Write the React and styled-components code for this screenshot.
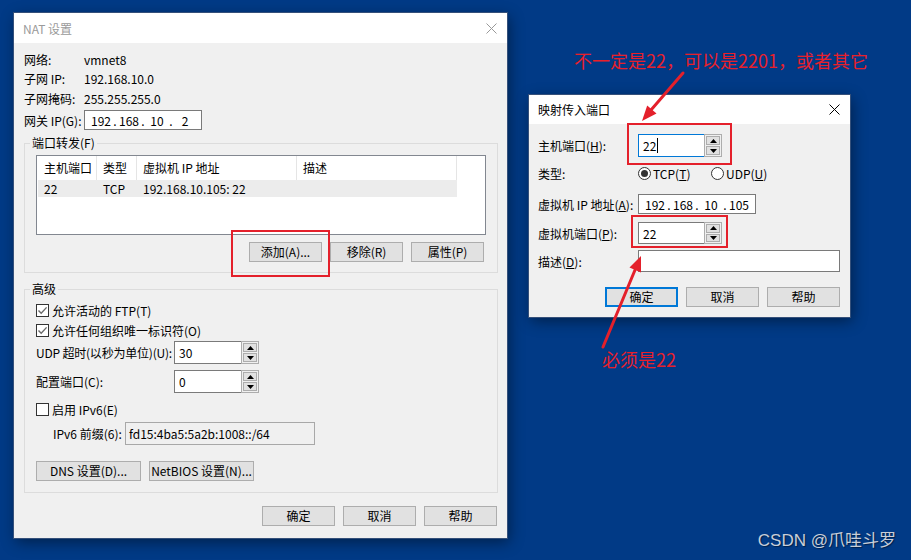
import React from 'react'
import styled, { createGlobalStyle } from 'styled-components'

const GlobalStyle = createGlobalStyle`
  html, body {
    margin: 0;
    padding: 0;
  }
  body {
    background: #013a86;
    font-family: "Noto Sans CJK SC", "Noto Sans", sans-serif;
    font-size: 12px;
    color: #000;
  }
`

const Desktop = styled.div`
  position: relative;
  width: 911px;
  height: 560px;
  overflow: hidden;
  background: #013a86;
`

// dialogs sit on the desktop at their own place
const Window = styled.div`
  position: absolute;
  left: ${p => p.$left}px;
  top: ${p => p.$top}px;
  width: ${p => p.$width}px;
  height: ${p => p.$height}px;
  background: #f0f0f0;
  box-shadow: 0 0 0 1px #35507a, 2px 4px 14px rgba(0, 0, 0, 0.45);
  display: flex;
  flex-direction: column;
  box-sizing: border-box;
`

const TitleBar = styled.div`
  flex: none;
  height: ${p => p.$h}px;
  background: #fff;
  display: flex;
  align-items: center;
  justify-content: space-between;
  padding: 0 10px 0 9px;
  color: ${p => (p.$inactive ? '#9a9a9a' : '#000')};
`

const Body = styled.div`
  flex: 1;
  display: flex;
  flex-direction: column;
  padding: ${p => p.$pad};
`

const InfoGrid = styled.div`
  display: grid;
  grid-template-columns: 60px auto;
  grid-template-rows: 20px 19px 21px 22px;
  align-items: center;
`

const Group = styled.fieldset`
  margin: ${p => p.$mt}px 0 0 0;
  padding: ${p => p.$pt}px 11px ${p => p.$pb}px 11px;
  border: 1px solid #dcdcdc;
  min-width: 0;
  display: flex;
  flex-direction: column;
  align-items: flex-start;
`

const Legend = styled.legend`
  padding: 0 2px;
  margin-left: -6px;
  line-height: 16px;
  font-size: 12px;
`

const ListBox = styled.div`
  align-self: stretch;
  height: 80px;
  box-sizing: border-box;
  border: 1px solid #828790;
  background: #fff;
  padding-left: 1px;
`

const ListRow = styled.div`
  display: grid;
  grid-template-columns: 59px 40px 160px 160px;
  background: ${p => (p.$head ? '#fff' : '#ececec')};
  width: 419px;
`

const Cell = styled.div`
  box-sizing: border-box;
  height: ${p => (p.$head ? 24 : 17)}px;
  line-height: ${p => (p.$head ? 24 : 17)}px;
  padding-left: 6px;
  border-right: ${p => (p.$head ? '1px solid #e5e5e5' : 'none')};
  white-space: nowrap;
`

const ButtonRow = styled.div`
  align-self: stretch;
  display: flex;
  justify-content: ${p => p.$justify || 'flex-end'};
  gap: ${p => p.$gap || 8}px;
  margin-top: ${p => p.$mt}px;
  padding-right: ${p => p.$pr || 0}px;
`

const Button = styled.button`
  width: ${p => p.$w || 73}px;
  height: 20px;
  box-sizing: border-box;
  background: #e1e1e1;
  border: 1px solid ${p => (p.$default ? '#0078d7' : '#adadad')};
  box-shadow: ${p => (p.$default ? 'inset 0 0 0 1px #0078d7' : 'none')};
  font: inherit;
  color: #000;
  padding: 0;
  line-height: 18px;
`

const CheckRow = styled.div`
  display: flex;
  align-items: center;
  gap: 3px;
  height: 20px;
  margin-top: ${p => p.$mt || 0}px;
`

const Box = styled.span`
  width: 13px;
  height: 13px;
  box-sizing: border-box;
  border: 1px solid #333;
  background: #fff;
  display: inline-flex;
  align-items: center;
  justify-content: center;
`

const FieldRow = styled.div`
  display: flex;
  align-items: center;
  height: ${p => p.$h}px;
  margin-top: ${p => p.$mt || 0}px;
  padding-left: ${p => p.$pl || 0}px;
`

const Label = styled.span`
  width: ${p => p.$w}px;
  flex: none;
  white-space: nowrap;
  letter-spacing: ${p => p.$tight ? '-0.2px' : '0'};
`

const TextBox = styled.div`
  width: ${p => p.$w}px;
  height: 100%;
  box-sizing: border-box;
  border: 1px solid ${p => (p.$disabled ? '#a8a8a8' : '#7a7a7a')};
  background: ${p => (p.$disabled ? '#f0f0f0' : '#fff')};
  display: flex;
  align-items: center;
  padding-left: ${p => p.$pl || 3}px;
  white-space: nowrap;
`

const SpinWrap = styled.div`
  display: flex;
  width: ${p => p.$w}px;
  height: 100%;
`

const SpinInput = styled.div`
  flex: 1;
  box-sizing: border-box;
  border: 1px solid ${p => (p.$focus ? '#0078d7' : '#7a7a7a')};
  border-right: none;
  background: #fff;
  display: flex;
  align-items: center;
  padding-left: 4px;
`

const SpinButtons = styled.div`
  width: 18px;
  flex: none;
  box-sizing: border-box;
  border: 1px solid #adadad;
  background: #f0f0f0;
  display: flex;
  flex-direction: column;
  gap: 1px;
  padding: 1px;
`

const SpinBtn = styled.div`
  flex: 1;
  box-sizing: border-box;
  border: 1px solid #adadad;
  background: #e1e1e1;
  display: flex;
  align-items: center;
  justify-content: center;
`

const Caret = styled.span`
  width: 1px;
  height: 15px;
  background: #000;
  margin-left: 1px;
`

const IpBox = styled.div`
  width: ${p => p.$w}px;
  height: 100%;
  box-sizing: border-box;
  border: 1px solid #7a7a7a;
  background: #fff;
  display: flex;
  align-items: center;
  padding-left: 6px;
`

const Octet = styled.span`
  width: 20px;
  text-align: center;
`

const Dot = styled.span`
  width: 8px;
  text-align: center;
`

const Key = styled.span`
  text-decoration: underline;
`

const RadioGroup = styled.div`
  display: flex;
  align-items: center;
`

const RadioItem = styled.label`
  display: flex;
  align-items: center;
  gap: 2px;
  width: ${p => p.$w}px;
`

const Radio = styled.span`
  width: 13px;
  height: 13px;
  box-sizing: border-box;
  border-radius: 50%;
  border: 1px solid #333;
  background: #fff;
  display: inline-flex;
  align-items: center;
  justify-content: center;
  &::after {
    content: '';
    width: 7px;
    height: 7px;
    border-radius: 50%;
    background: ${p => (p.$on ? '#333' : 'transparent')};
  }
`

// red marks drawn over the screenshot
const Mark = styled.div`
  position: absolute;
  left: ${p => p.$x}px;
  top: ${p => p.$y}px;
  width: ${p => p.$w}px;
  height: ${p => p.$h}px;
  box-sizing: border-box;
  border: 2px solid #e4202b;
  pointer-events: none;
`

const Note = styled.div`
  position: absolute;
  left: ${p => p.$x}px;
  top: ${p => p.$y}px;
  color: #e8202b;
  font-size: 18px;
  line-height: 20px;
  white-space: nowrap;
`

const Overlay = styled.svg`
  position: absolute;
  left: 0;
  top: 0;
  pointer-events: none;
`

const Watermark = styled.div`
  position: absolute;
  right: 15px;
  top: 530px;
  font-family: "Liberation Sans", "Noto Sans CJK SC", sans-serif;
  font-size: 17px;
  line-height: 22px;
  color: #c9ced8;
  text-shadow: 1px 1px 1px rgba(0, 0, 0, 0.45);
  white-space: nowrap;
`

const CloseIcon = ({ color }) => (
  <svg width="11" height="11" viewBox="0 0 11 11">
    <path d="M0.5 0.5 L10.5 10.5 M10.5 0.5 L0.5 10.5" stroke={color} strokeWidth="1" />
  </svg>
)

const Tick = () => (
  <svg width="11" height="11" viewBox="0 0 11 11">
    <path d="M1.5 5.5 L4.2 8.3 L9.6 2.4" fill="none" stroke="#6a6a6a" strokeWidth="1.4" />
  </svg>
)

const Check = ({ on, children, mt }) => (
  <CheckRow $mt={mt}>
    <Box>{on && <Tick />}</Box>
    <span>{children}</span>
  </CheckRow>
)

const Up = () => (
  <svg width="7" height="4" viewBox="0 0 7 4">
    <path d="M3.5 0 L7 4 L0 4 Z" fill="#000" />
  </svg>
)

const Down = () => (
  <svg width="7" height="4" viewBox="0 0 7 4">
    <path d="M0 0 L7 0 L3.5 4 Z" fill="#000" />
  </svg>
)

const Spinner = ({ value, width, focus, caret }) => (
  <SpinWrap $w={width}>
    <SpinInput $focus={focus}>
      {value}
      {caret && <Caret />}
    </SpinInput>
    <SpinButtons>
      <SpinBtn><Up /></SpinBtn>
      <SpinBtn><Down /></SpinBtn>
    </SpinButtons>
  </SpinWrap>
)

const IpField = ({ parts, width }) => (
  <IpBox $w={width}>
    {parts.map((p, i) => (
      <React.Fragment key={i}>
        {i > 0 && <Dot>.</Dot>}
        <Octet>{p}</Octet>
      </React.Fragment>
    ))}
  </IpBox>
)

const forwards = [{ host: '22', type: 'TCP', ip: '192.168.10.105: 22', desc: '' }]

const NatDialog = () => (
  <Window $left={14} $top={13} $width={493} $height={525}>
    <TitleBar $h={30} $inactive>
      <span>NAT 设置</span>
      <CloseIcon color="#999" />
    </TitleBar>
    <Body $pad="6px 9px 0 10px">
      <InfoGrid>
        <span>网络:</span>
        <span>vmnet8</span>
        <span>子网 IP:</span>
        <span>192.168.10.0</span>
        <span>子网掩码:</span>
        <span>255.255.255.0</span>
        <span>网关 IP(G):</span>
        <FieldRow $h={20}>
          <IpField parts={['192', '168', '10', '2']} width={118} />
        </FieldRow>
      </InfoGrid>

      <Group $mt={4} $pt={4} $pb={10}>
        <Legend>端口转发(F)</Legend>
        <ListBox>
          <ListRow $head>
            <Cell $head>主机端口</Cell>
            <Cell $head>类型</Cell>
            <Cell $head>虚拟机 IP 地址</Cell>
            <Cell $head>描述</Cell>
          </ListRow>
          {forwards.map(f => (
            <ListRow key={f.host}>
              <Cell>{f.host}</Cell>
              <Cell>{f.type}</Cell>
              <Cell>{f.ip}</Cell>
              <Cell>{f.desc}</Cell>
            </ListRow>
          ))}
        </ListBox>
        <ButtonRow $mt={7} $pr={2}>
          <Button>添加(A)...</Button>
          <Button>移除(R)</Button>
          <Button>属性(P)</Button>
        </ButtonRow>
      </Group>

      <Group $mt={8} $pt={3} $pb={11}>
        <Legend>高级</Legend>
        <Check on>允许活动的 FTP(T)</Check>
        <Check on>允许任何组织唯一标识符(O)</Check>
        <FieldRow $h={23} $mt={1}>
          <Label $w={138} $tight>UDP 超时(以秒为单位)(U):</Label>
          <Spinner value="30" width={85} />
        </FieldRow>
        <FieldRow $h={23} $mt={6}>
          <Label $w={138}>配置端口(C):</Label>
          <Spinner value="0" width={85} />
        </FieldRow>
        <Check mt={6}>启用 IPv6(E)</Check>
        <FieldRow $h={23} $mt={3} $pl={17}>
          <Label $w={72}>IPv6 前缀(6):</Label>
          <TextBox $w={190} $disabled>fd15:4ba5:5a2b:1008::/64</TextBox>
        </FieldRow>
        <ButtonRow $mt={16} $justify="flex-start" $gap={8}>
          <Button $w={105}>DNS 设置(D)...</Button>
          <Button $w={105}>NetBIOS 设置(N)...</Button>
        </ButtonRow>
      </Group>

      <ButtonRow $mt={13} $pr={1}>
        <Button>确定</Button>
        <Button>取消</Button>
        <Button>帮助</Button>
      </ButtonRow>
    </Body>
  </Window>
)

const MapDialog = () => (
  <Window $left={529} $top={95} $width={321} $height={222}>
    <TitleBar $h={29}>
      <span>映射传入端口</span>
      <CloseIcon color="#000" />
    </TitleBar>
    <Body $pad="10px 10px 0 9px">
      <FieldRow $h={23}>
        <Label $w={100}>主机端口(<Key>H</Key>):</Label>
        <Spinner value="22" width={84} focus caret />
      </FieldRow>
      <FieldRow $h={17} $mt={8}>
        <Label $w={100}>类型:</Label>
        <RadioGroup>
          <RadioItem $w={73}>
            <Radio $on />
            <span>TCP(<Key>T</Key>)</span>
          </RadioItem>
          <RadioItem $w={60}>
            <Radio />
            <span>UDP(<Key>U</Key>)</span>
          </RadioItem>
        </RadioGroup>
      </FieldRow>
      <FieldRow $h={20} $mt={12}>
        <Label $w={100}>虚拟机 IP 地址(<Key>A</Key>):</Label>
        <IpField parts={['192', '168', '10', '105']} width={118} />
      </FieldRow>
      <FieldRow $h={22} $mt={8}>
        <Label $w={100}>虚拟机端口(<Key>P</Key>):</Label>
        <Spinner value="22" width={84} />
      </FieldRow>
      <FieldRow $h={22} $mt={6}>
        <Label $w={100}>描述(<Key>D</Key>):</Label>
        <TextBox $w={202} />
      </FieldRow>
      <ButtonRow $mt={15} $gap={8} $pr={0}>
        <Button $default>确定</Button>
        <Button>取消</Button>
        <Button>帮助</Button>
      </ButtonRow>
    </Body>
  </Window>
)

const Arrows = () => (
  <Overlay width="911" height="560" viewBox="0 0 911 560">
    <g stroke="#e4202b" strokeWidth="3" strokeLinecap="round">
      <line x1="683" y1="73" x2="651" y2="110" />
      <line x1="603" y1="347" x2="635" y2="270" />
    </g>
    <g fill="#e4202b">
      <polygon points="642,121 656.5,113.5 647.2,105.5" />
      <polygon points="641,256 641,272.5 629.5,267.5" />
    </g>
  </Overlay>
)

export default function App() {
  return (
    <>
      <GlobalStyle />
      <Desktop>
        <NatDialog />
        <MapDialog />
        <Mark $x={231} $y={230} $w={99} $h={47} />
        <Mark $x={627} $y={123} $w={105} $h={42} />
        <Mark $x={631} $y={215} $w={97} $h={33} />
        <Arrows />
        <Note $x={574} $y={50}>不一定是22，可以是2201，或者其它</Note>
        <Note $x={602} $y={349}>必须是22</Note>
        <Watermark>CSDN @爪哇斗罗</Watermark>
      </Desktop>
    </>
  )
}
